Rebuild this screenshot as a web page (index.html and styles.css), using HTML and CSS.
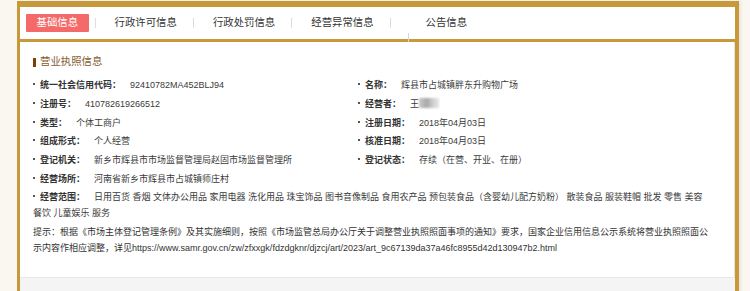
FILE: index.html
```html
<!DOCTYPE html>
<html lang="zh-CN">
<head>
    <meta charset="utf-8" />
    <title>营业执照信息</title>
    <link rel="stylesheet" href="styles.css">
</head>
<body>
    <div class="frame">
        <div class="tabs">
            <span class="tab active">基础信息</span>
            <span class="tab">行政许可信息</span>
            <span class="tab">行政处罚信息</span>
            <span class="tab">经营异常信息</span>
            <span class="tab last">公告信息</span>
            <span class="tick"></span>
        </div>

        <div class="panel">
            <h3 class="title">营业执照信息</h3>

            <div class="info">
                <div class="row"><span class="lbl">统一社会信用代码：</span><span class="val">92410782MA452BLJ94</span></div>
                <div class="row"><span class="lbl">名称：</span><span class="val">辉县市占城镇胖东升购物广场</span></div>

                <div class="row"><span class="lbl">注册号：</span><span class="val">410782619266512</span></div>
                <div class="row"><span class="lbl">经营者：</span><span class="val">王<span class="blur"></span></span></div>

                <div class="row"><span class="lbl">类型：</span><span class="val">个体工商户</span></div>
                <div class="row"><span class="lbl">注册日期：</span><span class="val">2018年04月03日</span></div>

                <div class="row"><span class="lbl">组成形式：</span><span class="val">个人经营</span></div>
                <div class="row"><span class="lbl">核准日期：</span><span class="val">2018年04月03日</span></div>

                <div class="row"><span class="lbl">登记机关：</span><span class="val">新乡市辉县市市场监督管理局赵固市场监督管理所</span></div>
                <div class="row"><span class="lbl">登记状态：</span><span class="val">存续（在营、开业、在册）</span></div>

                <div class="row"><span class="lbl">经营场所：</span><span class="val">河南省新乡市辉县市占城镇师庄村</span></div>

                <div class="row wide"><span class="lbl">经营范围：</span><span class="val">日用百货 香烟 文体办公用品 家用电器 洗化用品 珠宝饰品 图书音像制品 食用农产品 预包装食品（含婴幼儿配方奶粉） 散装食品 服装鞋帽 批发 零售 美容 餐饮 儿童娱乐 服务</span></div>
            </div>

            <p class="hint">提示：根据《市场主体登记管理条例》及其实施细则，按照《市场监管总局办公厅关于调整营业执照照面事项的通知》要求，国家企业信用信息公示系统将营业执照照面公示内容作相应调整，详见https://www.samr.gov.cn/zw/zfxxgk/fdzdgknr/djzcj/art/2023/art_9c67139da37a46fc8955d42d130947b2.html</p>
        </div>

        <div class="foot"></div>
    </div>
</body>
</html>
```

FILE: styles.css
```css
* {
    margin: 0px;
    padding: 0px;
    box-sizing: border-box;
}

body {
    background: #faf7f1;
    font-family: 'Liberation Sans', 'Noto Sans CJK SC', sans-serif;
    color: #333;
    overflow: hidden;
}

.frame {
    width: 722px;
    margin: 1px 0 0 17px;
    background: #c8993a;
    padding: 6px 4px 0 3px;
    box-shadow: 2px 0 3px rgba(0, 0, 0, 0.07);
}

/* tab bar */
.tabs {
    position: relative;
    height: 32px;
    background: #fff;
    display: flex;
    align-items: center;
    padding-left: 6px;
    font-size: 10.4px;
}

.tab {
    line-height: 18px;
    position: relative;
    padding: 0 16px 0 20px;
    color: #333;
}

    .tab::before {
        content: '';
        position: absolute;
        left: 0;
        top: 4px;
        width: 1px;
        height: 10px;
        background: #dcdcdc;
    }

    .tab.active {
        background: #f46a68;
        color: #fff;
        padding: 0 10.5px;
        margin-right: 6px;
        border-radius: 1px;
    }

        .tab.active::before {
            display: none;
        }

    .tab.last {
        padding-left: 36px;
    }

.tick {
    position: absolute;
    left: 388px;
    top: 26px;
    width: 1px;
    height: 9px;
    background: #d6d6d6;
}

/* content */
.panel {
    margin-top: 3px;
    background: #fff;
    padding: 12px 21px 21px 13px;
    border-right: 1px solid #e2e2e2;
    border-bottom: 1px solid #e8e8e8;
}

.title {
    font-size: 10.4px;
    font-weight: normal;
    line-height: 16px;
    color: #865a30;
    display: flex;
    align-items: center;
    margin-bottom: 8.25px;
}

    .title::before {
        content: '';
        width: 3px;
        height: 9px;
        background: #7c3f0c;
        margin-right: 4px;
    }

.info {
    display: grid;
    grid-template-columns: 325px 1fr;
    row-gap: 3.17px;
    font-size: 9px;
    line-height: 15.5px;
}

.row.wide {
    grid-column: 1 / -1;
}

.lbl {
    font-weight: bold;
    color: #333;
    margin-right: 9px;
}

    .lbl::before {
        content: '';
        display: inline-block;
        width: 2px;
        height: 2px;
        background: #555;
        margin-right: 5px;
        vertical-align: 3px;
    }

.val {
    color: #3a3a3a;
}

.blur {
    display: inline-block;
    width: 20px;
    height: 10px;
    vertical-align: -1px;
    background: linear-gradient(90deg, #c9c9c9, #a8a8a8 40%, #d0d0d0 70%, #e6e6e6);
    filter: blur(1.2px);
}

.hint {
    margin-top: 3.17px;
    font-size: 9px;
    line-height: 16px;
    color: #333;
}

.foot {
    height: 20px;
    background: #f4f4f4;
}
```
